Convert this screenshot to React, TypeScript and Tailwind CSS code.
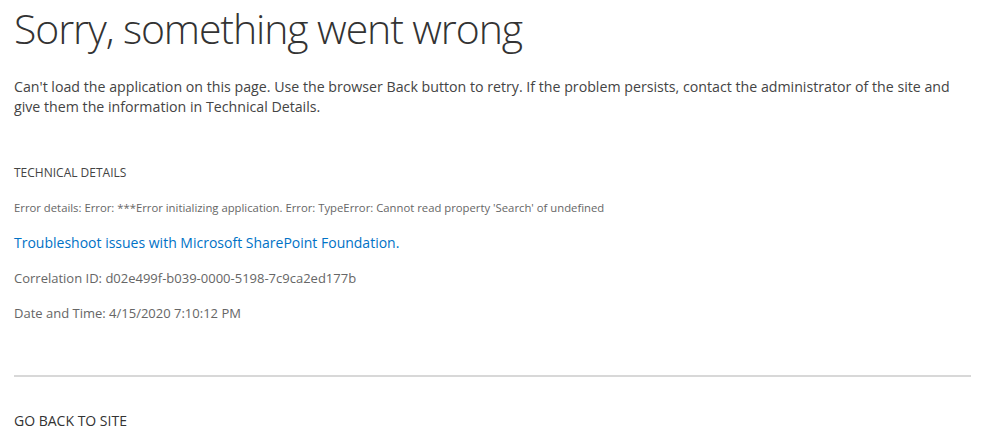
import React from 'react';

const font = { fontFamily: '"Open Sans", "Noto Sans", "Liberation Sans", sans-serif' };

export default function App() {
  return (
    <div className="w-[998px] h-[441px] bg-white overflow-hidden px-[14px]" style={font}>
      <h1 className="pt-[4px] text-[41px] leading-[48px] font-light text-[#333] tracking-[-1.1px]">
        Sorry, something went wrong
      </h1>
      <p className="mt-[25px] text-[14.2px] leading-[20px] text-[#444] max-w-[950px]">
        Can't load the application on this page. Use the browser Back button to retry. If the problem persists, contact the administrator of the site and give them the information in Technical Details.
      </p>

      <div className="mt-[48px] text-[12px] leading-[16px] text-[#444]">TECHNICAL DETAILS</div>
      <div className="mt-[20px] text-[11.3px] leading-[14px] text-[#666]">
        Error details: Error: ***Error initializing application. Error: TypeError: Cannot read property 'Search' of undefined
      </div>
      <a href="#" className="block mt-[18px] text-[14px] leading-[20px] text-[#0072c6]">
        Troubleshoot issues with Microsoft SharePoint Foundation.
      </a>
      <div className="mt-[15px] text-[13px] leading-[20px] text-[#666]">
        Correlation ID: d02e499f-b039-0000-5198-7c9ca2ed177b
      </div>
      <div className="mt-[15px] text-[13px] leading-[20px] text-[#666]">
        Date and Time: 4/15/2020 7:10:12 PM
      </div>

      <div className="mt-[52px] w-[957px] h-[2px] bg-[#d8d8d8]" />
      <div className="mt-[35px] text-[14px] leading-[18px] text-[#333]">GO BACK TO SITE</div>
    </div>
  );
}
